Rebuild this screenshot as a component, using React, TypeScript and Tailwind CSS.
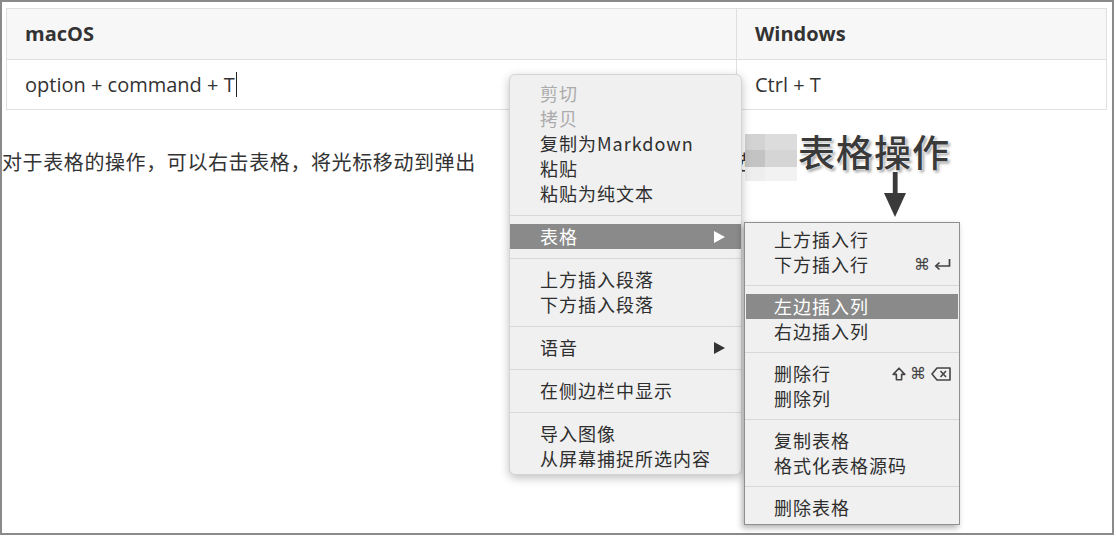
import React from 'react';

type MenuEntry =
    | { kind: 'item'; label: string; disabled?: boolean; active?: boolean; submenu?: boolean; shortcut?: string }
    | { kind: 'sep' };

const mainMenu: MenuEntry[] = [
    { kind: 'item', label: '剪切', disabled: true },
    { kind: 'item', label: '拷贝', disabled: true },
    { kind: 'item', label: '复制为Markdown' },
    { kind: 'item', label: '粘贴' },
    { kind: 'item', label: '粘贴为纯文本' },
    { kind: 'sep' },
    { kind: 'item', label: '表格', active: true, submenu: true },
    { kind: 'sep' },
    { kind: 'item', label: '上方插入段落' },
    { kind: 'item', label: '下方插入段落' },
    { kind: 'sep' },
    { kind: 'item', label: '语音', submenu: true },
    { kind: 'sep' },
    { kind: 'item', label: '在侧边栏中显示' },
    { kind: 'sep' },
    { kind: 'item', label: '导入图像' },
    { kind: 'item', label: '从屏幕捕捉所选内容' },
];

const tableMenu: MenuEntry[] = [
    { kind: 'item', label: '上方插入行' },
    { kind: 'item', label: '下方插入行', shortcut: 'enter' },
    { kind: 'sep' },
    { kind: 'item', label: '左边插入列', active: true },
    { kind: 'item', label: '右边插入列' },
    { kind: 'sep' },
    { kind: 'item', label: '删除行', shortcut: 'delete' },
    { kind: 'item', label: '删除列' },
    { kind: 'sep' },
    { kind: 'item', label: '复制表格' },
    { kind: 'item', label: '格式化表格源码' },
    { kind: 'sep' },
    { kind: 'item', label: '删除表格' },
];

const Cmd = () => <span className="font-['DejaVu_Sans',sans-serif] text-[16px] leading-none text-[#444]">⌘</span>;

const Shortcut = ({ type }: { type: string }) => {
    if (type === 'enter') {
        return (
            <span className="flex items-center gap-[3px]">
                <Cmd />
                <svg width="17" height="13" viewBox="0 0 17 13" fill="none" stroke="#444" strokeWidth="1.7">
                    <path d="M15.5 1 V8 H2" />
                    <path d="M5.5 4.5 L1.8 8 L5.5 11.5" />
                </svg>
            </span>
        );
    }
    return (
        <span className="flex items-center gap-[4px]">
            <svg width="14" height="14" viewBox="0 0 14 14" fill="none" stroke="#444" strokeWidth="1.6" strokeLinejoin="round">
                <path d="M7 1.2 L12.8 7.4 H9.6 V12.8 H4.4 V7.4 H1.2 Z" />
            </svg>
            <Cmd />
            <svg width="20" height="14" viewBox="0 0 20 14" fill="none" stroke="#444" strokeWidth="1.6" strokeLinejoin="round">
                <path d="M6 1 H19 V13 H6 L1 7 Z" />
                <path d="M9.5 4 L15 10 M15 4 L9.5 10" />
            </svg>
        </span>
    );
};

const Menu = ({ entries, sepH, sub }: { entries: MenuEntry[]; sepH: string; sub?: boolean }) => (
    <div className="flex flex-col">
        {entries.map((e, i) =>
            e.kind === 'sep' ? (
                <div key={i} className={`${sepH} flex items-center`}>
                    <div className="h-px w-full bg-[#d8d8d8]" />
                </div>
            ) : (
                <div
                    key={i}
                    className={`h-[25px] flex items-center justify-between ${sub ? 'pl-[28px] pr-[7px] mx-[1px]' : 'pl-[30px] pr-[16px]'} ${
                        e.active ? 'bg-[#8a8a8a] text-white' : e.disabled ? 'text-[#ababab]' : 'text-[#2e2e2e]'
                    }`}
                >
                    <span>{e.label}</span>
                    {e.submenu && (
                        <span
                            className={`w-0 h-0 border-y-[6px] border-y-transparent border-l-[11px] ${
                                e.active ? 'border-l-white' : 'border-l-[#333]'
                            }`}
                        />
                    )}
                    {e.shortcut && <Shortcut type={e.shortcut} />}
                </div>
            )
        )}
    </div>
);

export default function App() {
    return (
        <div className="w-[1116px] h-[536px] bg-white relative overflow-hidden font-['Open_Sans','Noto_Sans_CJK_SC',sans-serif]">
            <div className="w-[1114px] h-[535px] border-2 border-[#8a8a8a] bg-white">
                {/* table */}
                <div className="ml-[4px] mt-[6px] w-[1101px] border border-[#dfdfdf] grid grid-cols-[730px_1fr] text-[20px] text-[#333]">
                    <div className="h-[51px] bg-[#f7f7f7] border-r border-b border-[#dfdfdf] flex items-center pl-[18px] font-bold">macOS</div>
                    <div className="h-[51px] bg-[#f7f7f7] border-b border-[#dfdfdf] flex items-center pl-[18px] font-bold">Windows</div>
                    <div className="h-[49px] border-r border-[#dfdfdf] flex items-center pl-[18px]">
                        option + command + T<span className="inline-block w-px h-[25px] bg-[#222] ml-[1px]" />
                    </div>
                    <div className="h-[49px] flex items-center pl-[18px]">Ctrl + T</div>
                </div>

                {/* paragraph */}
                <div className="mt-[37px] w-[750px] flex justify-between overflow-hidden whitespace-nowrap text-[20px] leading-[30px] tracking-[0.6px] text-[#333] font-['Noto_Sans_CJK_SC',sans-serif]">
                    <span>对于表格的操作，可以右击表格，将光标移动到弹出</span>
                    <span>选</span>
                </div>
            </div>

            {/* pixelated blur */}
            <div className="absolute left-[745px] top-[134px] w-[52px] grid grid-cols-[20px_32px] grid-rows-[16px_17px_14px]">
                <div className="bg-[#d3d3d3]" />
                <div className="bg-[#dcdcdc]" />
                <div className="bg-[#c3c3c3]" />
                <div className="bg-[#d5d5d5]" />
                <div className="bg-[#eeeeee]" />
                <div className="bg-[#f2f2f2]" />
            </div>

            {/* annotation */}
            <div className="absolute left-[798px] top-[131px] text-[37px] leading-[40px] tracking-[1px] font-medium text-[#3a3a3a] font-['Noto_Sans_CJK_SC',sans-serif] [text-shadow:0_0_2px_#fff,0_0_3px_#fff,2px_2px_3px_rgba(0,0,0,0.45)]">
                表格操作
            </div>
            <svg className="absolute left-[883px] top-[172px]" width="24" height="46" viewBox="0 0 24 46">
                <rect x="9.8" y="0" width="4.8" height="25" fill="#3a3a3a" />
                <polygon points="1,21 23,21 12,45" fill="#3a3a3a" />
            </svg>

            {/* context menu */}
            <div className="absolute left-[509px] top-[74px] w-[233px] h-[401px] rounded-[6px] bg-[#f0f0f0] border border-[#d4d4d4] shadow-[0_3px_10px_rgba(0,0,0,0.25)] pt-[6px] text-[18px] tracking-[1px] font-['Noto_Sans_CJK_SC',sans-serif] overflow-hidden">
                <Menu entries={mainMenu} sepH="h-[18px]" />
            </div>

            {/* table submenu */}
            <div className="absolute left-[744px] top-[222px] w-[216px] h-[303px] bg-[#f0f0f0] border border-[#8f8f8f] shadow-[-2px_3px_6px_rgba(0,0,0,0.3)] pt-[4px] text-[18px] tracking-[1px] font-['Noto_Sans_CJK_SC',sans-serif]">
                <Menu entries={tableMenu} sepH="h-[17px]" sub />
            </div>
        </div>
    );
}
